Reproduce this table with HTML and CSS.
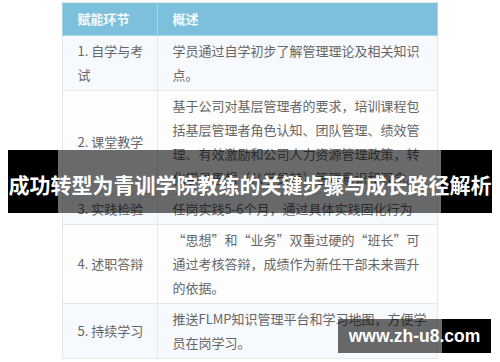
FILE: index.html
```html
<!DOCTYPE html>
<html lang="zh-CN">
<head>
<meta charset="utf-8">
<title>青训学院教练</title>
<link rel="stylesheet" href="styles.css">
</head>
<body>
<div class="page">
  <div class="shot">
    <table class="plan">
      <colgroup><col class="c1"><col class="c2"></colgroup>
      <thead>
        <tr><th>赋能环节</th><th>概述</th></tr>
      </thead>
      <tbody>
        <tr class="odd"><td class="step">1. 自学与考试</td><td>学员通过自学初步了解管理理论及相关知识点。</td></tr>
        <tr><td class="step">2. 课堂教学</td><td>基于公司对基层管理者的要求，培训课程包括基层管理者角色认知、团队管理、绩效管理、有效激励和公司人力资源管理政策，转化学员思想（从学员转）管理意识和观念。</td></tr>
        <tr class="odd"><td class="step">3. 实践检验</td><td>任岗实践5-6个月，通过具体实践固化行为</td></tr>
        <tr><td class="step">4. 述职答辩</td><td>“思想”和“业务”双重过硬的“班长”可通过考核答辩，成绩作为新任干部未来晋升的依据。</td></tr>
        <tr class="odd"><td class="step">5. 持续学习</td><td>推送FLMP知识管理平台和学习地图，方便学员在岗学习。</td></tr>
      </tbody>
    </table>
  </div>
  <div class="banner"><h1 class="title">成功转型为青训学院教练的关键步骤与成长路径解析</h1></div>
  <div class="mark">www.zh-u8.com</div>
</div>
</body>
</html>
```
FILE: styles.css
```css
html, body {
  margin: 0;
  padding: 0;
  background: #ffffff;
}
.page {
  position: relative;
  width: 500px;
  height: 362px;
  overflow: hidden;
  font-family: "Noto Sans CJK SC", "Noto Sans", sans-serif;
}
.shot {
  width: 383px;
  margin: 0 auto;
  padding: 2px 5px 0 3px;
  box-sizing: border-box;
  background: #ffffff;
}
.plan {
  width: 375px;
  border-collapse: collapse;
  table-layout: fixed;
  font-size: 13px;
  color: #666666;
  border: 1px solid #e4e9ee;
}
.c1 { width: 95px; }
.c2 { width: 280px; }
.plan th {
  background: #7cc0dc;
  color: #f4fafd;
  font-weight: bold;
  text-align: left;
  height: 32px;
  padding: 0 15px;
  line-height: 24px;
  border: 1px solid #a9d5e8;
  border-top: none;
}
.plan td {
  padding: 3px 8px 3px 15px;
  line-height: 24px;
  border: 1px solid #e4e9ee;
  vertical-align: middle;
  word-break: break-all;
}
.plan tbody tr { background: #fdfdfe; }
.plan tbody tr.odd { background: #f6f9fd; }
.banner {
  position: absolute;
  left: 8px;
  top: 150px;
  width: 484px;
  height: 63px;
  display: flex;
  align-items: center;
  justify-content: center;
  background: linear-gradient(to right, #000 0, #000 50px, rgba(0,0,0,0.58) 50px, rgba(0,0,0,0.58) 433px, #000 433px, #000 100%);
}
.title {
  margin: 4px 0 0 0;
  font-size: 21px;
  line-height: 28px;
  font-weight: bold;
  color: #ffffff;
  white-space: nowrap;
  letter-spacing: 0;
}
.mark {
  position: absolute;
  left: 338px;
  top: 319px;
  width: 153px;
  height: 34px;
  display: flex;
  align-items: center;
  justify-content: center;
  font-family: "Liberation Sans", Arial, sans-serif;
  font-weight: bold;
  font-size: 17.5px;
  color: #ffffff;
  background: linear-gradient(to right, rgba(0,0,0,0.58) 0, rgba(0,0,0,0.58) 104px, #000 104px, #000 100%);
}
```
